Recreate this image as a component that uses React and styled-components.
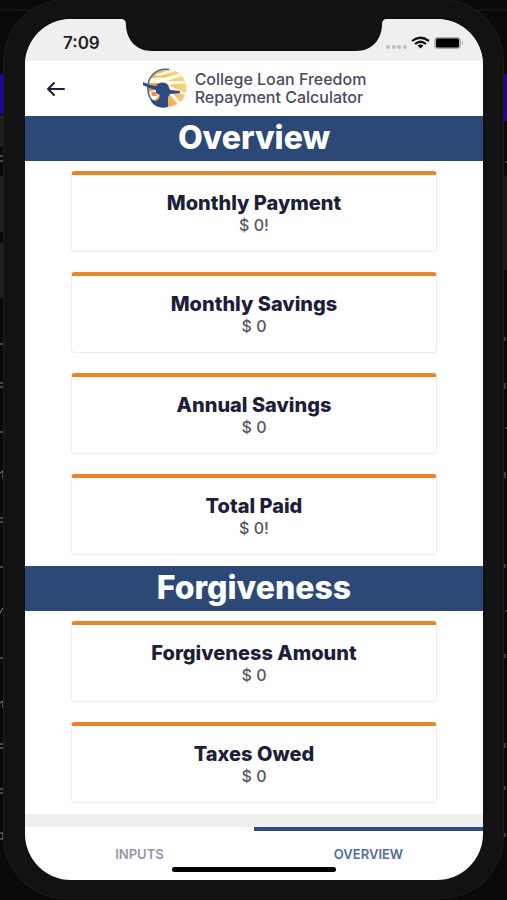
import React, { useState } from "react";
import styled, { createGlobalStyle } from "styled-components";

const navy = "#2b4877";
const ink = "#1d1e38";

const GlobalStyle = createGlobalStyle`
  *, *::before, *::after { box-sizing: border-box; }
  body {
    margin: 0;
    background: #090909;
    font-family: Inter, "Liberation Sans", sans-serif;
    color: ${ink};
  }
  h1, h2, h3, p { margin: 0; }
  button { border: 0; padding: 0; background: none; font: inherit; color: inherit; cursor: pointer; }
`;

const Desktop = styled.div`
  position: relative;
  display: flex;
  min-height: 100vh;
  padding: 0 4px 2px;
  overflow: hidden;
`;

const EdgeDrawing = styled.svg`
  position: absolute;
  top: 0;
  ${(p) => p.$side}: 0;
  width: 60px;
  height: 900px;
`;

const Phone = styled.div`
  position: relative;
  flex: 1;
  display: flex;
  padding: 19px 20px 18px 21px;
  border-radius: 62px;
  background: #121212;
  box-shadow: 0 0 0 1px #1d1d1d;
`;

const Screen = styled.div`
  flex: 1;
  display: flex;
  flex-direction: column;
  min-width: 0;
  overflow: hidden;
  border-radius: 46px;
  background: #fff;
`;

const StatusBar = styled.div`
  position: relative;
  display: flex;
  justify-content: space-between;
  align-items: center;
  padding: 6px 19px 0 38px;
  height: 42px;
  background: #efefef;
`;

const Clock = styled.time`
  font-size: 17px;
  line-height: 20px;
  font-weight: 600;
  color: #222;
`;

const Notch = styled.svg`
  position: absolute;
  top: 0;
  left: 50%;
  width: 266px;
  height: 32px;
  transform: translateX(-50%);
`;

const StatusIcons = styled.svg`
  position: relative;
  width: 80px;
  height: 16px;
`;

const AppBar = styled.header`
  display: grid;
  grid-template-columns: 1fr auto 1fr;
  align-items: center;
  height: 55px;
`;

const BackButton = styled.button`
  display: flex;
  justify-self: start;
  margin-left: 20px;
  svg { width: 22px; height: 20px; }
`;

const Brand = styled.div`
  display: flex;
  align-items: center;
  gap: 7px;
  svg { width: 46px; height: 42px; }
`;

const BrandName = styled.h1`
  padding-bottom: 2px;
  font-size: 16px;
  line-height: 18px;
  font-weight: 500;
  color: #4b4b5d;
`;

const Section = styled.section`
  flex: none;
`;

const SectionTitle = styled.h2`
  padding: 5px 0 6px;
  background: ${navy};
  color: #fff;
  font-size: 32px;
  line-height: 34px;
  font-weight: 800;
  text-align: center;
`;

const CardList = styled.div`
  display: flex;
  flex-direction: column;
  gap: 20px;
  padding: 10px 10% 11px;
`;

const Card = styled.article`
  padding: 16px 8px;
  border: 1px solid #ececf0;
  border-top: 4px solid #ec8428;
  border-radius: 4px;
  text-align: center;
`;

const CardTitle = styled.h3`
  font-size: 20px;
  line-height: 24px;
  font-weight: 800;
`;

const CardValue = styled.p`
  font-size: 16px;
  line-height: 20px;
  font-weight: 500;
  color: #55555f;
`;

const TabBar = styled.nav`
  position: relative;
  display: flex;
  margin-top: auto;
  border-top: 13px solid #eee;
`;

const Tab = styled.button`
  flex: 1;
  padding: 13px 0 16px;
  border-top: 4px solid ${(p) => (p.$active ? "#284c83" : "transparent")};
  font-size: 13px;
  line-height: 20px;
  font-weight: 600;
  color: ${(p) => (p.$active ? "#566b9d" : "#9495ab")};
`;

const HomeIndicator = styled.div`
  position: absolute;
  bottom: 8px;
  left: 50%;
  width: 164px;
  height: 5px;
  border-radius: 3px;
  background: #000;
  transform: translateX(-50%);
`;

const sections = [
  {
    title: "Overview",
    cards: [
      ["Monthly Payment", "$ 0!"],
      ["Monthly Savings", "$ 0"],
      ["Annual Savings", "$ 0"],
      ["Total Paid", "$ 0!"],
    ],
  },
  {
    title: "Forgiveness",
    cards: [
      ["Forgiveness Amount", "$ 0"],
      ["Taxes Owed", "$ 0"],
    ],
  },
];

function LeftEdge() {
  return (
    <EdgeDrawing $side="left" viewBox="0 0 60 900" aria-hidden="true">
      <path d="M0 10H40" stroke="#151515" strokeWidth="2" />
      <path d="M0 74H5V114H0Z" fill="#2200a6" />
      <path d="M0 115H5V147H0Z" fill="#1d1f1f" />
      <path d="M0 176H6V232H0ZM0 243H6V298H0Z" fill="#202020" />
      <path
        d="M0 156H3M0 161H3M0 344H3M0 383H3M0 387H3M0 432H3M0 473L3 471V478M0 518H3M0 522H3M0 567H3M0 613L3 608M0 658H3M0 703L3 701V708M0 744H3M0 748H3M0 789H3M0 793H3M0 833H3V839H0"
        fill="none"
        stroke="#8a8a8a"
      />
    </EdgeDrawing>
  );
}

function RightEdge() {
  return (
    <EdgeDrawing $side="right" viewBox="0 0 60 900" aria-hidden="true">
      <path d="M20 10H60" stroke="#151515" strokeWidth="2" />
      <path d="M56 74H60V121H56Z" fill="#2200a6" />
      <path d="M56 176H60V270H56Z" fill="#1b1b1b" />
      <path
        d="M58 162H60M58 337V341M58 383V389M58 428H60M58 472V478M58 564V568M58 611H60M58 654V658M58 743V748M58 786V790M58 833V837"
        stroke="#6a6a6a"
      />
    </EdgeDrawing>
  );
}

function Logo() {
  return (
    <svg viewBox="0 0 46 42" aria-hidden="true">
      <defs>
        <linearGradient id="sun" x1="0" y1="0.8" x2="1" y2="0.2">
          <stop offset="0" stopColor="#e8893f" />
          <stop offset="0.5" stopColor="#f2bb62" />
          <stop offset="1" stopColor="#f3e48c" />
        </linearGradient>
        <clipPath id="disc"><ellipse cx="25" cy="20" rx="19.500" ry="19" /></clipPath>
      </defs>
      <g clipPath="url(#disc)">
        <path d="M5 1H46V40H5Z" fill="url(#sun)" />
        <path d="M5 12Q13 8 21 10L46 3V6L25 13L46 13V15L26 17L46 26V28L27 21L42 38L39 40L24 22L16 15L5 15Z" fill="#fffbe9" />
        <path d="M12 7L34 0L37 2L18 8Z" fill="#fffbe9" />
        <path d="M5 24L14 22L17 28L12 33L5 30Z" fill="#fff4e6" />
        <path d="M9 24L14 24L15 28L10 28Z" fill="#e9944d" />
      </g>
      <path d="M27 1.500C13 0 5 10 6 21C6 31 13 38 22 39" fill="none" stroke="#4b6799" strokeWidth="1.500" />
      <path d="M1 14L8 17L14 18C16 14 23 13 26 17L28 22L38 23V25L28 26L26 29V39Q17 41 11 36L8 31L14 33L17 31L18 27L14 25V22L7 20L1 17Z" fill="#2c4b82" />
    </svg>
  );
}

export default function App() {
  const [active, setActive] = useState("OVERVIEW");
  return (
    <>
      <GlobalStyle />
      <Desktop>
        <LeftEdge />
        <RightEdge />
        <Phone>
          <Screen>
            <StatusBar>
              <Clock>7:09</Clock>
              <Notch viewBox="0 0 266 32" aria-hidden="true">
                <path d="M0 0C4 0 5 2 5 7C6 21 15 32 31 32H235C251 32 260 21 261 7C261 2 262 0 266 0Z" fill="#121212" />
              </Notch>
              <StatusIcons viewBox="0 0 80 16" role="img" aria-label="Wi-Fi connected, battery full">
                <g fill="#bcbcbc">
                  <circle cx="4" cy="12" r="2" />
                  <circle cx="10" cy="12" r="2" />
                  <circle cx="15" cy="12" r="2" />
                  <circle cx="21" cy="12" r="2" />
                </g>
                <g fill="none" stroke="#111" strokeWidth="2.200">
                  <path d="M28 6Q36 -0.500 45 6" />
                  <path d="M31 9Q36.500 4.500 42 9" />
                </g>
                <path d="M33.500 10.500Q36.500 8.500 39.500 10.500L36.500 13.500Z" fill="#111" />
                <rect x="50.500" y="2.500" width="26" height="11" rx="3" fill="#bbb" stroke="#aaa" />
                <rect x="52" y="3.500" width="23" height="9" rx="1.500" />
                <path d="M78 6Q80 8 78 10Z" fill="#999" />
              </StatusIcons>
            </StatusBar>
            <AppBar>
              <BackButton type="button" aria-label="Back">
                <svg viewBox="0 0 22 20" fill="none" stroke={ink} strokeWidth="2" strokeLinecap="round" strokeLinejoin="round">
                  <path d="M19 10H3M9 4L3 10L9 16" />
                </svg>
              </BackButton>
              <Brand>
                <Logo />
                <BrandName>College Loan Freedom<br />Repayment Calculator</BrandName>
              </Brand>
            </AppBar>
            <main>
              {sections.map((s) => (
                <Section key={s.title}>
                  <SectionTitle>{s.title}</SectionTitle>
                  <CardList>
                    {s.cards.map(([title, value]) => (
                      <Card key={title}>
                        <CardTitle>{title}</CardTitle>
                        <CardValue>{value}</CardValue>
                      </Card>
                    ))}
                  </CardList>
                </Section>
              ))}
            </main>
            <TabBar>
              {["INPUTS", "OVERVIEW"].map((name) => (
                <Tab
                  key={name}
                  type="button"
                  $active={active === name}
                  aria-current={active === name ? "page" : undefined}
                  onClick={() => setActive(name)}
                >
                  {name}
                </Tab>
              ))}
              <HomeIndicator />
            </TabBar>
          </Screen>
        </Phone>
      </Desktop>
    </>
  );
}
